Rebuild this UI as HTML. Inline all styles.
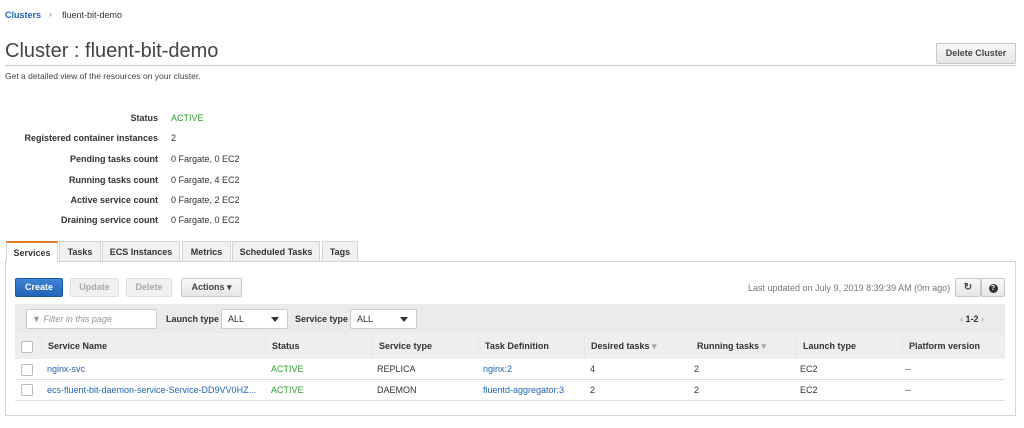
<!DOCTYPE html>
<html><head><meta charset="utf-8"><style>
*{box-sizing:border-box;margin:0;padding:0}
body{width:1024px;height:428px;background:#fff;font-family:"Liberation Sans",Arial,sans-serif;color:#333;position:relative;overflow:hidden;font-size:9px}
.a{position:absolute;white-space:nowrap}
.blue{color:#1f64b7}
.green{color:#2d9c2d}
.b{font-weight:bold}
.btn{position:absolute;border:1px solid #c8c8c8;border-radius:2px;background:linear-gradient(#f8f8f8,#e6e6e6);font-weight:bold;text-align:center;font-size:9px;color:#444}
.tab{position:absolute;top:241px;height:20px;border:1px solid #d5d5d5;border-bottom:none;background:#f1f1f1;font-weight:bold;font-size:9px;text-align:center;line-height:20px;color:#333}
.sel{position:absolute;top:309px;height:20px;border:1px solid #ccc;border-radius:2px;background:#fff;padding-left:6px;line-height:18px;font-size:9px}
.sel:after{content:"";position:absolute;right:8px;top:7px;border-left:4px solid transparent;border-right:4px solid transparent;border-top:5px solid #333}
.lbl{position:absolute;right:866px;font-weight:bold;text-align:right}
.th{position:absolute;top:333px;height:26px;line-height:26px;font-weight:bold;border-left:1px solid #e8e8e8;padding-left:6px}
.cb{position:absolute;width:12px;height:12px;border:1px solid #bbb;border-radius:2px;background:#fff}
</style></head><body>
<div class="a b blue" style="left:5px;top:10px">Clusters</div>
<div class="a" style="left:49px;top:9px;color:#777">›</div>
<div class="a" style="left:62px;top:10px">fluent-bit-demo</div>
<div class="a" style="left:5px;top:40px;font-size:20px;color:#444">Cluster : fluent-bit-demo</div>
<div class="a" style="left:5px;top:65px;width:1011px;border-top:1px solid #ccc"></div>
<div class="btn" style="left:936px;top:43px;width:80px;height:21px;line-height:19px">Delete Cluster</div>
<div class="a" style="left:5px;top:71px;font-size:8.5px;color:#444">Get a detailed view of the resources on your cluster.</div>

<div class="lbl" style="top:113px">Status</div><div class="a green" style="left:171px;top:113px">ACTIVE</div>
<div class="lbl" style="top:133px">Registered container instances</div><div class="a" style="left:171px;top:133px">2</div>
<div class="lbl" style="top:154px">Pending tasks count</div><div class="a" style="left:171px;top:154px">0 Fargate, 0 EC2</div>
<div class="lbl" style="top:175px">Running tasks count</div><div class="a" style="left:171px;top:175px">0 Fargate, 4 EC2</div>
<div class="lbl" style="top:195px">Active service count</div><div class="a" style="left:171px;top:195px">0 Fargate, 2 EC2</div>
<div class="lbl" style="top:215px">Draining service count</div><div class="a" style="left:171px;top:215px">0 Fargate, 0 EC2</div>

<div class="a" style="left:5px;top:261px;width:1011px;height:155px;border:1px solid #d5d5d5"></div>
<div class="tab" style="left:6px;width:52px;background:#fff;border-top:2px solid #e07b2a;height:21px">Services</div>
<div class="tab" style="left:59px;width:42px">Tasks</div>
<div class="tab" style="left:102px;width:78px">ECS Instances</div>
<div class="tab" style="left:182px;width:49px">Metrics</div>
<div class="tab" style="left:232px;width:88px">Scheduled Tasks</div>
<div class="tab" style="left:322px;width:36px">Tags</div>

<div class="btn" style="left:15px;top:278px;width:48px;height:19px;line-height:17px;background:linear-gradient(#3d83d4,#2263b8);border-color:#1d5aa6;color:#fff">Create</div>
<div class="btn" style="left:70px;top:278px;width:49px;height:19px;line-height:17px;color:#aaa;background:#f0f0f0;border-color:#e0e0e0">Update</div>
<div class="btn" style="left:126px;top:278px;width:46px;height:19px;line-height:17px;color:#aaa;background:#f0f0f0;border-color:#e0e0e0">Delete</div>
<div class="btn" style="left:181px;top:278px;width:61px;height:19px;line-height:17px">Actions ▾</div>
<div class="a" style="left:748px;top:283px;color:#777;font-size:9px">Last updated on July 9, 2019 8:39:39 AM (0m ago)</div>
<div class="btn" style="left:955px;top:278px;width:26px;height:19px;line-height:17px;font-size:10px">↻</div>
<div class="btn" style="left:981px;top:278px;width:24px;height:19px;line-height:17px"><span style="display:inline-block;width:9px;height:9px;border-radius:50%;background:#333;color:#fff;font-size:7px;line-height:9px;margin-top:4px">?</span></div>

<div class="a" style="left:15px;top:304px;width:990px;height:29px;background:#ebebeb"></div>
<div class="a" style="left:26px;top:309px;width:131px;height:20px;border:1px solid #ccc;border-radius:2px;background:#fff;line-height:18px;padding-left:5px;color:#999;font-style:italic">▼ Filter in this page</div>
<div class="a b" style="left:166px;top:314px">Launch type</div>
<div class="sel" style="left:221px;width:67px">ALL</div>
<div class="a b" style="left:295px;top:314px">Service type</div>
<div class="sel" style="left:350px;width:67px">ALL</div>
<div class="a" style="left:960px;top:314px;color:#999">‹ <b style="color:#333">1-2</b> ›</div>

<div class="a" style="left:15px;top:333px;width:990px;height:26px;background:#eee"></div>
<div class="cb" style="left:21px;top:341px"></div>
<div class="th" style="left:41px">Service Name</div>
<div class="th" style="left:265px">Status</div>
<div class="th" style="left:372px">Service type</div>
<div class="th" style="left:478px">Task Definition</div>
<div class="th" style="left:584px">Desired tasks <span style="color:#aaa">▾</span></div>
<div class="th" style="left:690px">Running tasks <span style="color:#aaa">▾</span></div>
<div class="th" style="left:796px">Launch type</div>
<div class="th" style="left:902px">Platform version</div>

<div class="a" style="left:15px;top:379px;width:990px;border-top:1px solid #ddd"></div>
<div class="a" style="left:15px;top:400px;width:990px;border-top:1px solid #ddd"></div>
<div class="cb" style="left:21px;top:364px"></div>
<div class="a blue" style="left:47px;top:364px">nginx-svc</div>
<div class="a green" style="left:271px;top:364px">ACTIVE</div>
<div class="a" style="left:377px;top:364px">REPLICA</div>
<div class="a blue" style="left:483px;top:364px">nginx:2</div>
<div class="a" style="left:590px;top:364px">4</div>
<div class="a" style="left:694px;top:364px">2</div>
<div class="a" style="left:800px;top:364px">EC2</div>
<div class="a" style="left:905px;top:364px">--</div>

<div class="cb" style="left:21px;top:384px"></div>
<div class="a blue" style="left:47px;top:385px">ecs-fluent-bit-daemon-service-Service-DD9VV0HZ...</div>
<div class="a green" style="left:271px;top:385px">ACTIVE</div>
<div class="a" style="left:377px;top:385px">DAEMON</div>
<div class="a blue" style="left:483px;top:385px">fluentd-aggregator:3</div>
<div class="a" style="left:590px;top:385px">2</div>
<div class="a" style="left:694px;top:385px">2</div>
<div class="a" style="left:800px;top:385px">EC2</div>
<div class="a" style="left:905px;top:385px">--</div>
</body></html>
